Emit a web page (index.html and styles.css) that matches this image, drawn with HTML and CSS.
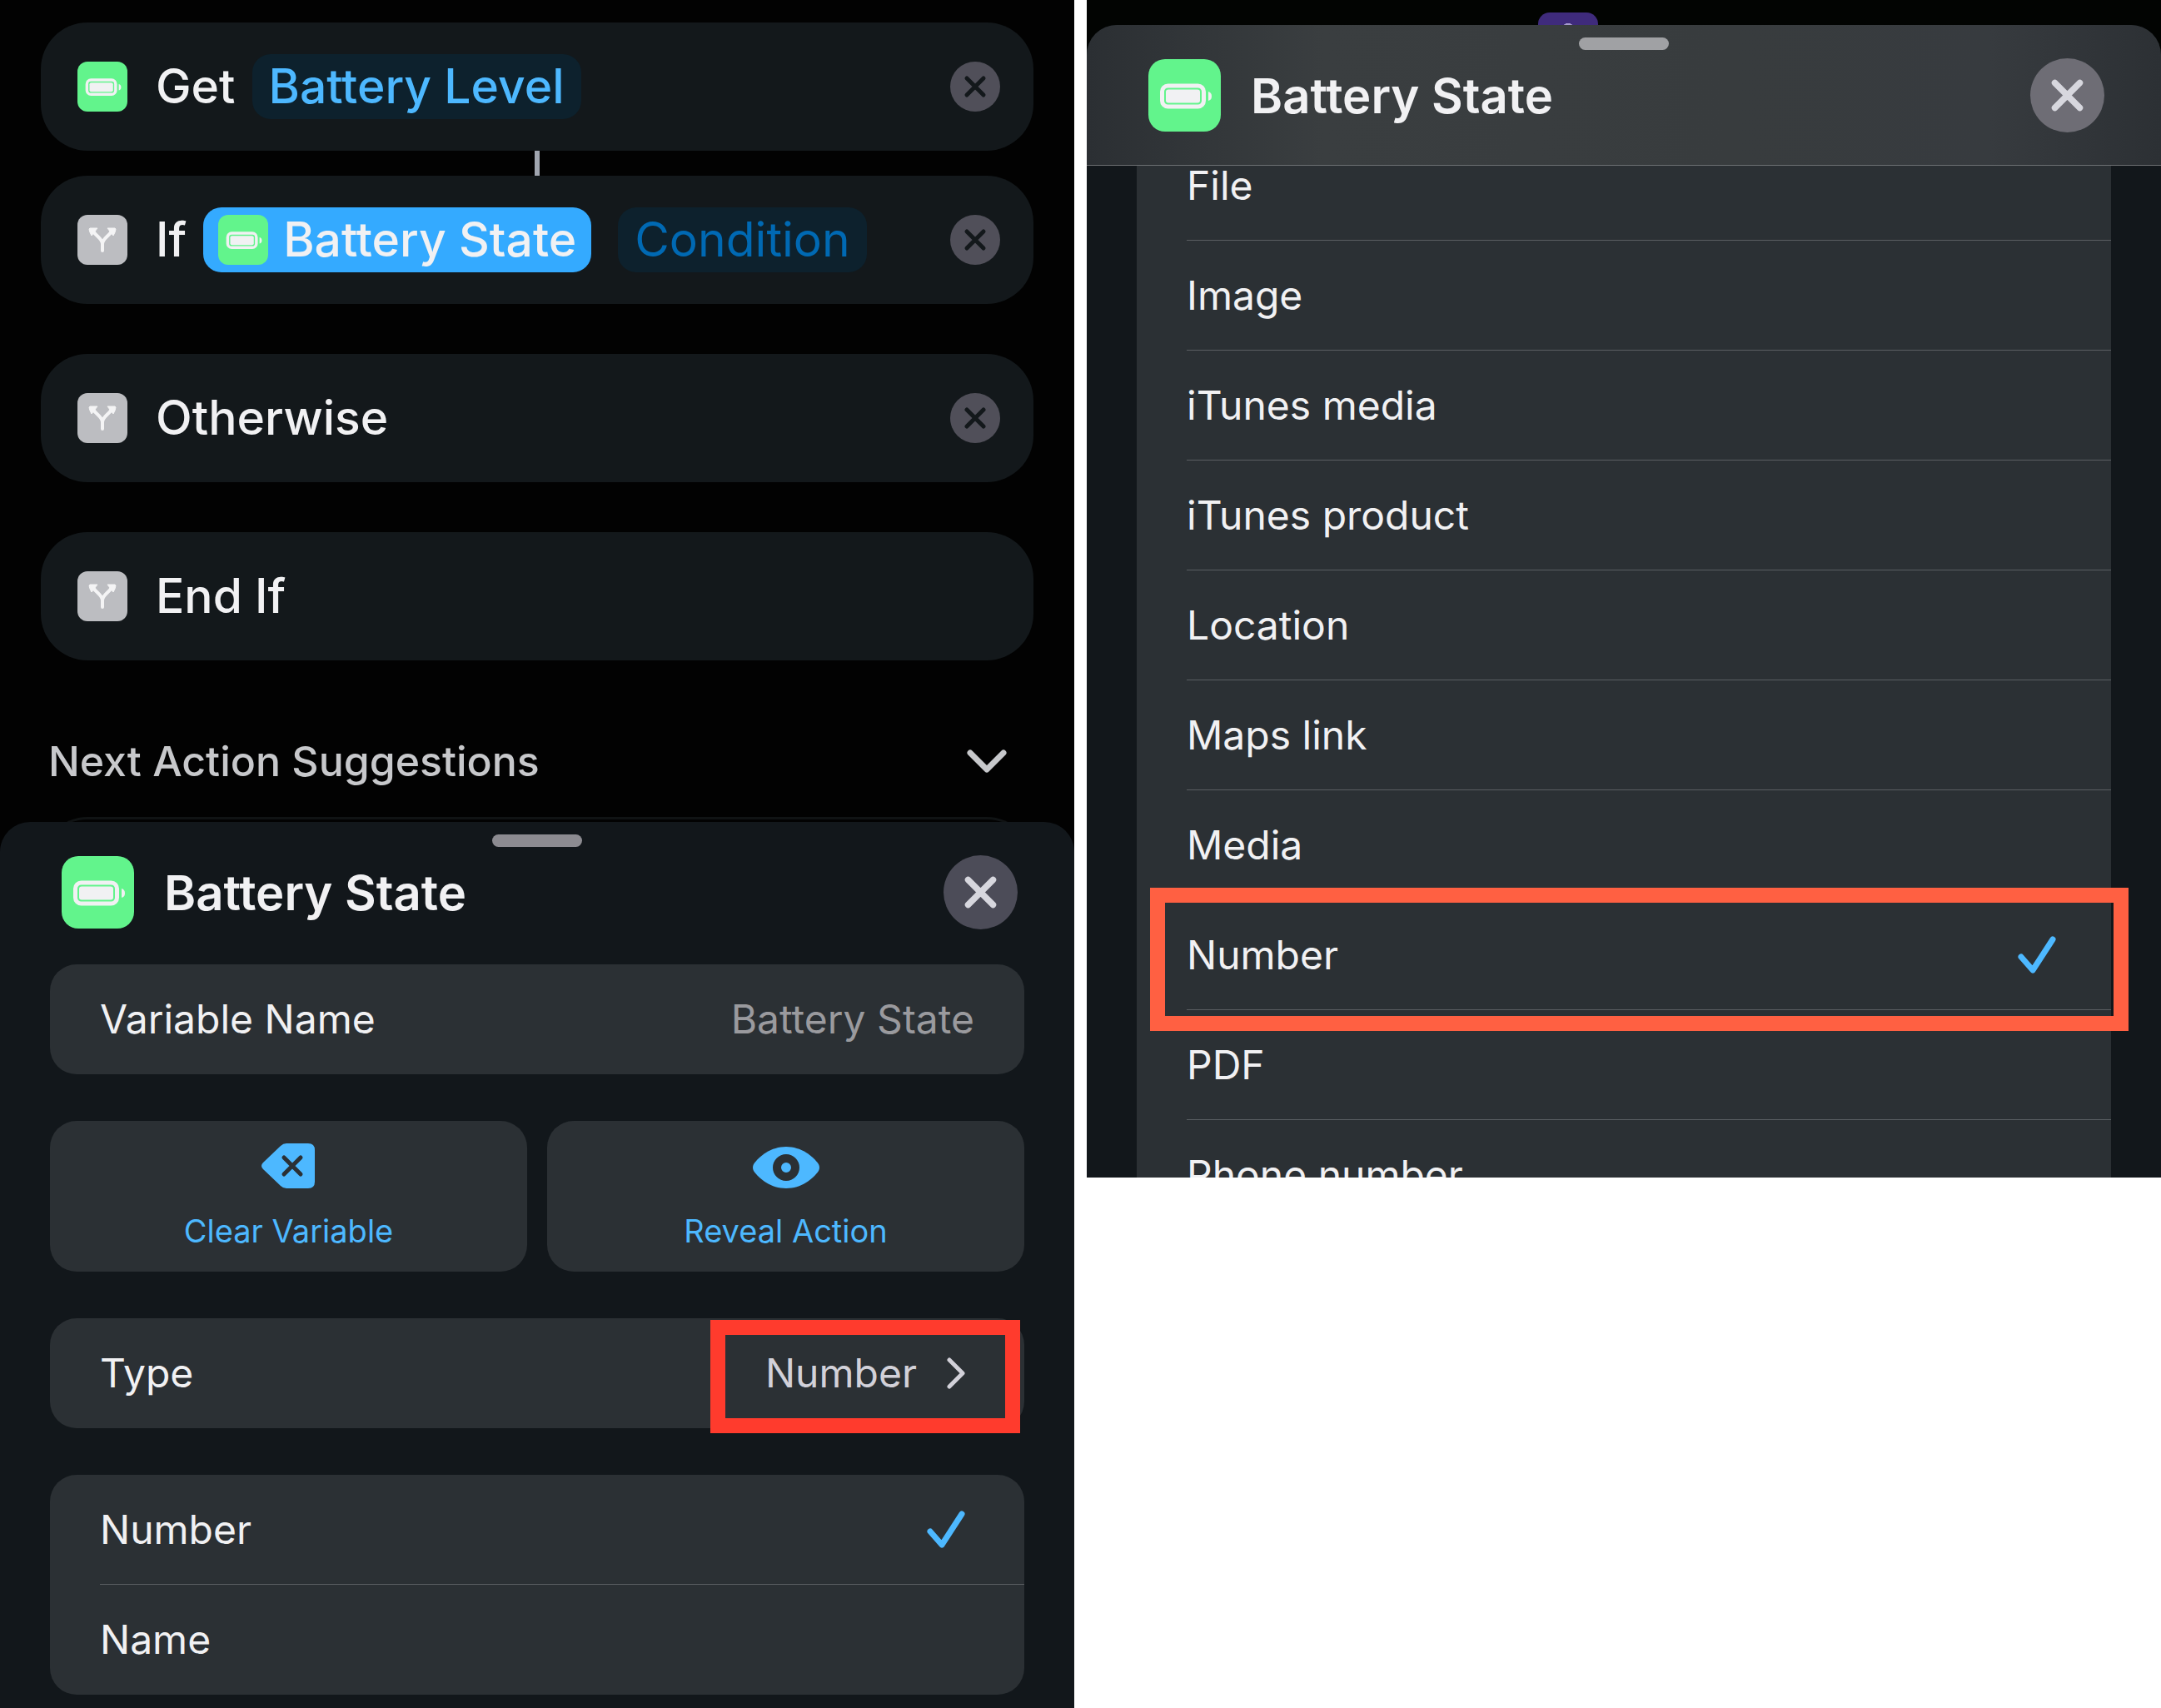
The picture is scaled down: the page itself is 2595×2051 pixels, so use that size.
FILE: index.html
```html
<!DOCTYPE html>
<html lang="en">
<head>
<meta charset="utf-8">
<meta name="viewport" content="width=device-width, initial-scale=1">
<title>Shortcuts – Battery State</title>
<link rel="stylesheet" href="styles.css">
</head>
<body>
<svg class="sprite" aria-hidden="true">
  <symbol id="battery" viewBox="0 0 87 87">
    <rect x="16.500" y="32" width="50" height="25" rx="7" fill="none" stroke="#f1f1f3" stroke-width="5"/>
    <rect x="21" y="36.500" width="41" height="16" rx="3" fill="#f1f1f3"/>
    <path d="M72 39Q76 40 76 44.500T72 50Z" fill="#f1f1f3"/>
  </symbol>
  <symbol id="branch" viewBox="0 0 60 60">
    <path d="M30 43V35C30 29 24 27 19 20M30 35C30 29 36 27 41 20" fill="none" stroke="#f4f4f5" stroke-width="4" stroke-linecap="round"/>
    <path d="M15 16H24L17 25Q14 20 14 17ZM45 16H36L43 25Q46 20 46 17Z" fill="#f4f4f5" stroke="#f4f4f5" stroke-width="1" stroke-linejoin="round"/>
  </symbol>
  <symbol id="cross" viewBox="0 0 60 60">
    <path d="M20 20L40 40M40 20L20 40" fill="none" stroke="currentColor" stroke-width="5" stroke-linecap="round"/>
  </symbol>
  <symbol id="cross-large" viewBox="0 0 89 89">
    <path d="M29.500 29.500L59.500 59.500M59.500 29.500L29.500 59.500" fill="none" stroke="currentColor" stroke-width="7.500" stroke-linecap="round"/>
  </symbol>
  <symbol id="check" viewBox="0 0 46 46">
    <path d="M4 25L18 41L42 4" fill="none" stroke="#4db8ff" stroke-width="7" stroke-linecap="round" stroke-linejoin="round"/>
  </symbol>
</svg>
<main class="screens">
  <section class="screen screen-editor" aria-label="Shortcut editor">
    <div class="editor">
      <div class="action">
        <svg class="tile tile-green"><use href="#battery"/></svg>
        <span>Get</span>
        <button class="token token-param" type="button">Battery Level</button>
        <button class="remove" type="button" aria-label="Remove Get action"><svg><use href="#cross"/></svg></button>
      </div>
      <div class="connector"></div>
      <div class="action">
        <svg class="tile tile-gray"><use href="#branch"/></svg>
        <span>If</span>
        <button class="token token-active" type="button"><svg class="tile tile-green"><use href="#battery"/></svg>Battery State</button>
        <button class="token token-empty" type="button">Condition</button>
        <button class="remove" type="button" aria-label="Remove If action"><svg><use href="#cross"/></svg></button>
      </div>
      <div class="action action-spaced">
        <svg class="tile tile-gray"><use href="#branch"/></svg>
        <span>Otherwise</span>
        <button class="remove" type="button" aria-label="Remove Otherwise"><svg><use href="#cross"/></svg></button>
      </div>
      <div class="action action-spaced">
        <svg class="tile tile-gray"><use href="#branch"/></svg>
        <span>End If</span>
      </div>
      <button class="suggestions" type="button">
        <span>Next Action Suggestions</span>
        <svg class="chevron-down" viewBox="0 0 48 28"><path d="M4 4L24 24L44 4" fill="none" stroke="currentColor" stroke-width="7" stroke-linecap="round" stroke-linejoin="round"/></svg>
      </button>
      <div class="peek"></div>
    </div>
    <div class="sheet">
      <div class="grabber"></div>
      <header class="sheet-header">
        <svg class="tile tile-large tile-green"><use href="#battery"/></svg>
        <h1 class="sheet-title">Battery State</h1>
        <button class="close" type="button" aria-label="Close"><svg><use href="#cross-large"/></svg></button>
      </header>
      <div class="sheet-body">
        <div class="cell">
          <label for="variable-name">Variable Name</label>
          <input class="field" id="variable-name" type="text" placeholder="Battery State">
        </div>
        <div class="tools">
          <button class="tool" type="button">
            <svg class="tool-icon" viewBox="0 0 80 58"><path d="M30 4Q33 1 37 1H63Q71 1 71 9V47Q71 55 63 55H37Q33 55 30 52L9 32Q5 28 9 24Z" fill="#4db8ff"/><path d="M34 18L54 38M54 18L34 38" fill="none" stroke="#2b3034" stroke-width="5" stroke-linecap="round"/></svg>
            Clear Variable
          </button>
          <button class="tool" type="button">
            <svg class="tool-icon" viewBox="0 0 80 58"><path d="M40 5C58 5 72 16 79 26Q81 30 79 34C72 44 58 55 40 55S8 44 1 34Q-1 30 1 26C8 16 22 5 40 5Z" fill="#4db8ff"/><circle cx="40" cy="30" r="11" fill="none" stroke="#2b3034" stroke-width="10"/></svg>
            Reveal Action
          </button>
        </div>
        <div class="cell">
          <span>Type</span>
          <button class="disclosure" type="button">Number
            <svg class="chevron-right" viewBox="0 0 22 38"><path d="M3 3L19 19L3 35" fill="none" stroke="currentColor" stroke-width="5" stroke-linecap="round" stroke-linejoin="round"/></svg>
          </button>
          <div class="mark mark-type"></div>
        </div>
        <div class="options">
          <label class="option"><input class="radio" type="radio" name="property" checked>Number<svg class="check"><use href="#check"/></svg></label>
          <label class="option"><input class="radio" type="radio" name="property">Name<svg class="check"><use href="#check"/></svg></label>
        </div>
      </div>
    </div>
  </section>

  <section class="screen screen-types" aria-label="Type picker">
    <div class="backdrop"><div class="app-icon"></div></div>
    <div class="sheet sheet-scrolled">
      <div class="sheet-top">
        <div class="grabber"></div>
        <header class="sheet-header">
          <svg class="tile tile-large tile-green"><use href="#battery"/></svg>
          <h2 class="sheet-title">Battery State</h2>
          <button class="close" type="button" aria-label="Close"><svg><use href="#cross-large"/></svg></button>
        </header>
      </div>
      <div class="scroller">
        <div class="options options-long">
          <label class="option"><input class="radio" type="radio" name="type">File<svg class="check"><use href="#check"/></svg></label>
          <label class="option"><input class="radio" type="radio" name="type">Image<svg class="check"><use href="#check"/></svg></label>
          <label class="option"><input class="radio" type="radio" name="type">iTunes media<svg class="check"><use href="#check"/></svg></label>
          <label class="option"><input class="radio" type="radio" name="type">iTunes product<svg class="check"><use href="#check"/></svg></label>
          <label class="option"><input class="radio" type="radio" name="type">Location<svg class="check"><use href="#check"/></svg></label>
          <label class="option"><input class="radio" type="radio" name="type">Maps link<svg class="check"><use href="#check"/></svg></label>
          <label class="option"><input class="radio" type="radio" name="type">Media<svg class="check"><use href="#check"/></svg></label>
          <label class="option"><input class="radio" type="radio" name="type" checked>Number<svg class="check"><use href="#check"/></svg><span class="mark mark-number"></span></label>
          <label class="option"><input class="radio" type="radio" name="type">PDF<svg class="check"><use href="#check"/></svg></label>
          <label class="option"><input class="radio" type="radio" name="type">Phone number<svg class="check"><use href="#check"/></svg></label>
        </div>
      </div>
    </div>
  </section>
</main>
</body>
</html>
```
FILE: styles.css
```css
* {
  box-sizing: border-box;
}

body {
  margin: 0;
  background: #fff;
  color: #f1f1f3;
  font-family: Inter, "Liberation Sans", sans-serif;
  font-size: 48px;
  line-height: 60px;
}

button,
input {
  margin: 0;
  padding: 0;
  border: 0;
  background: none;
  color: inherit;
  font: inherit;
}

svg {
  display: block;
  flex: none;
}

.sprite {
  position: absolute;
  width: 0;
  height: 0;
}

.screens {
  display: flex;
  align-items: flex-start;
  gap: 15px;
}

.screen {
  flex: 1;
  min-width: 0;
  overflow: hidden;
}

.screen-editor {
  display: flex;
  flex-direction: column;
  min-height: 100vh;
  background: #020202;
}

/* Shortcut actions */

.editor {
  padding: 27px 49px 0;
}

.action {
  display: flex;
  align-items: center;
  height: 154px;
  padding: 0 40px 0 44px;
  border-radius: 56px;
  background: #13181b;
  font-size: 57px;
  font-weight: 500;
}

.action > span {
  margin: 0 20px 0 34px;
}

.action-spaced {
  margin-top: 60px;
}

.connector {
  width: 6px;
  height: 30px;
  margin: 0 auto;
  background: #a0a5af;
}

.tile {
  width: 60px;
  height: 60px;
  border-radius: 12px;
}

.tile-green {
  background: #62f48c;
}

.tile-gray {
  background: #bcbdc1;
}

.tile-large {
  width: 87px;
  height: 87px;
  border-radius: 20px;
}

.token {
  display: flex;
  align-items: center;
  gap: 18px;
  height: 78px;
  padding: 0 20px;
  border-radius: 22px;
}

.token-param {
  background: #0d212d;
  color: #4db8ff;
}

.token-active {
  margin-right: 32px;
  padding: 0 18px;
  background: #34aaff;
}

.token-empty {
  background: #0d212d;
  color: #0069b3;
  font-weight: 400;
}

.remove {
  width: 60px;
  height: 60px;
  margin-left: auto;
  border-radius: 50%;
  background: #504f59;
  color: #13181b;
}

.remove svg {
  width: 60px;
  height: 60px;
}

.suggestions {
  display: flex;
  align-items: center;
  justify-content: space-between;
  width: 100%;
  padding: 91px 32px 37px 9px;
  color: #c7c8cb;
  font-size: 50px;
  font-weight: 500;
}

.chevron-down {
  width: 48px;
  height: 28px;
}

/* Top edge of the card that the sheet covers */
.peek {
  height: 60px;
  margin-bottom: -54px;
  border: 3px solid #101314;
  border-bottom: 0;
  border-radius: 56px 56px 0 0;
}

/* Sheets */

.sheet {
  position: relative;
  flex: 1;
  border-radius: 36px 36px 0 0;
  background: #12171b;
}

.grabber {
  width: 108px;
  height: 15px;
  margin: 0 auto 10px;
  border-radius: 8px;
  background: #8c8b91;
}

.sheet > .grabber {
  margin-top: 15px;
}

.sheet-header {
  display: flex;
  align-items: center;
  padding: 0 68px 0 74px;
}

.sheet-title {
  margin: 0 0 0 36px;
  font-size: 58px;
  font-weight: 600;
}

.close {
  width: 89px;
  height: 89px;
  margin-left: auto;
  border-radius: 50%;
  background: #4c4c58;
  color: #d7d7de;
}

.close svg {
  width: 89px;
  height: 89px;
}

.sheet-body {
  display: flex;
  flex-direction: column;
  gap: 56px;
  padding: 42px 60px 16px;
}

.cell {
  position: relative;
  display: flex;
  align-items: center;
  justify-content: space-between;
  height: 132px;
  padding: 0 60px;
  border-radius: 32px;
  background: #2b3034;
}

.field {
  flex: 1;
  min-width: 0;
  text-align: right;
}

.field::placeholder {
  color: #9a9a9e;
  opacity: 1;
}

.tools {
  display: grid;
  grid-template-columns: 1fr 1fr;
  gap: 24px;
}

.tool {
  display: flex;
  flex-direction: column;
  align-items: center;
  gap: 24px;
  padding: 26px 0 25px;
  border-radius: 32px;
  background: #2b3034;
  color: #4db8ff;
  font-size: 38px;
  line-height: 48px;
}

.tool-icon {
  width: 80px;
  height: 58px;
}

.disclosure {
  display: flex;
  align-items: center;
  gap: 36px;
  padding-right: 11px;
  color: #d2d1d9;
}

.chevron-right {
  width: 22px;
  height: 38px;
}

.options {
  border-radius: 32px;
  background: #2b3034;
}

.option {
  position: relative;
  display: flex;
  align-items: center;
  height: 132px;
  margin-left: 60px;
  padding-right: 71px;
  border-bottom: 1px solid #5a5e62;
}

.option:last-child {
  border-bottom: 0;
}

.radio {
  width: 0;
  height: 0;
  appearance: none;
}

.check {
  width: 46px;
  height: 46px;
  margin-left: auto;
  visibility: hidden;
}

.radio:checked ~ .check {
  visibility: visible;
}

/* Call-out frames */

.mark {
  position: absolute;
  border: 18px solid #ff3b2d;
}

.mark-type {
  top: 2px;
  right: 5px;
  bottom: -6px;
  width: 372px;
}

.mark-number {
  top: -15px;
  right: -21px;
  bottom: -26px;
  left: -44px;
  border-color: #ff6042;
}

/* Type picker */

.screen-types {
  background: #020402;
}

.backdrop {
  display: flex;
  justify-content: center;
  height: 30px;
  padding: 15px 134px 0 0;
}

.app-icon {
  width: 72px;
  height: 30px;
  border-radius: 14px 14px 0 0;
  background: radial-gradient(ellipse 5px 2px at 36px 15px, #a79bd0 90%, #3f2b7c);
}

.sheet-top {
  padding: 15px 0 39px;
  border-bottom: 1px solid #6d7073;
  border-radius: 36px 36px 0 0;
  background: linear-gradient(90deg, #2b2f33, #3a3e40 22%, #383c3e 60%, #373b3f 84%, #2c3034);
}

.sheet-top .grabber {
  background: #a0a1a4;
}

.sheet-top .close {
  background: #6e6d75;
}

.scroller {
  height: 1215px;
  padding: 0 60px;
  overflow: hidden;
}

.options-long {
  margin-top: -42px;
  border-radius: 0;
}

.options-long .option {
  padding-right: 66px;
}
```
